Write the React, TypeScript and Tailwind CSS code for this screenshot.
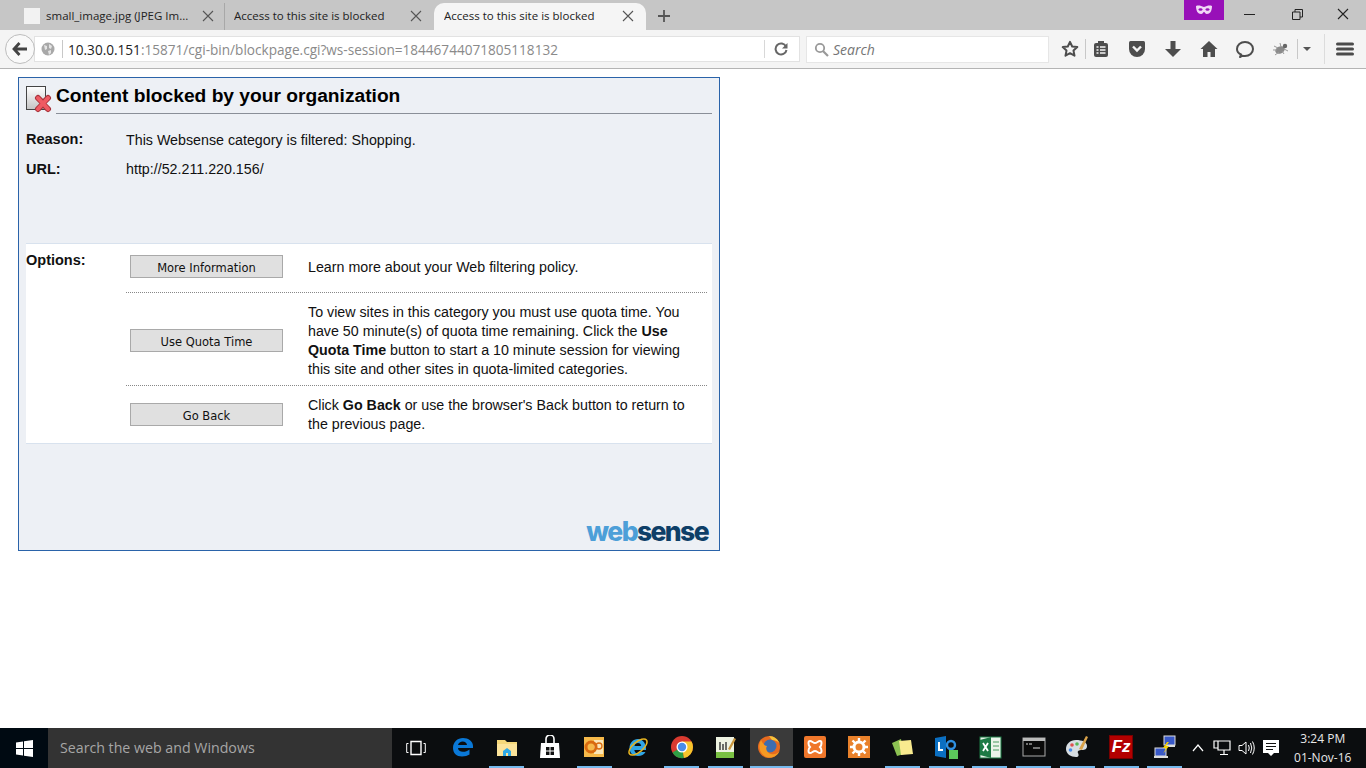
import React from "react";

const ui = { fontFamily: '"Open Sans", "Noto Sans", sans-serif' };
const arial = { fontFamily: '"Liberation Sans", Arial, sans-serif' };

function X({ c = "#555" }: { c?: string }) {
  return (
    <svg width="12" height="12" viewBox="0 0 12 12" className="shrink-0">
      <path d="M1 1l10 10M11 1L1 11" stroke={c} strokeWidth="1.1" fill="none" />
    </svg>
  );
}

function Tab({ text, active, sep, icon, className }: { text: string; active?: boolean; sep?: boolean; icon?: boolean; className: string }) {
  return (
    <div className={`flex items-center h-[27px] mt-[3px] pb-[1px] text-[11.5px] text-[#222] ${className} ${active ? "bg-[#f5f5f5] rounded-t-[10px]" : ""} ${sep ? "border-r border-[#a8a8a8]" : ""}`} style={ui}>
      {icon && <div className="w-[16px] h-[16px] bg-[#f2f2f2] mr-[6px] shrink-0" />}
      <span className="flex-1 whitespace-nowrap overflow-hidden">{text}</span>
      <X />
    </div>
  );
}

function NavIcons() {
  const fill = "#4d4d4d";
  return (
    <div className="flex items-center h-full ml-[12px]">
      <svg width="18" height="18" viewBox="0 0 18 18" className="mr-[6px]">
        <path d="M9 1.8l2.2 4.7 5.1.6-3.8 3.5 1 5.1L9 13.2l-4.5 2.500 1-5.100L1.700 7.100l5.100-.6z" fill="none" stroke={fill} strokeWidth="2" strokeLinejoin="round" />
      </svg>
      <div className="w-px h-[20px] bg-[#c8c8c8] mr-[7px]" />
      <svg width="16" height="18" viewBox="0 0 16 18" className="mr-[19px]">
        <rect x="1" y="3" width="14" height="14" rx="2" fill={fill} />
        <rect x="5" y="1" width="6" height="4" fill={fill} />
        <path d="M3.500 7h2M7 7h5.500M3.500 10h2M7 10h5.500M3.500 13h2M7 13h5.500" stroke="#f5f5f5" strokeWidth="1.500" />
      </svg>
      <svg width="18" height="18" viewBox="0 0 18 18" className="mr-[18px]">
        <path d="M1 2.500Q1 1 2.500 1h13Q17 1 17 2.500V9a8 8 0 0 1-16 0z" fill={fill} />
        <path d="M5 6.500l4 4 4-4" fill="none" stroke="#f5f5f5" strokeWidth="2.400" />
      </svg>
      <svg width="18" height="18" viewBox="0 0 18 18" className="mr-[18px]">
        <path d="M6.500 1h5v8H17l-8 8-8-8h5.500z" fill={fill} />
      </svg>
      <svg width="18" height="18" viewBox="0 0 18 18" className="mr-[18px]">
        <path d="M9 1L.500 9H3v8h4.500v-5h3v5H15V9h2.500z" fill={fill} />
      </svg>
      <svg width="18" height="18" viewBox="0 0 18 18" className="mr-[18px]">
        <path d="M5 14.500C2.500 13.400 1 11.400 1 9c0-4 3.500-7 8-7s8 3 8 7-3.500 7-8 7c-.9 0-1.800-.1-2.600-.3L4 17z" fill="none" stroke={fill} strokeWidth="2" strokeLinejoin="round" />
      </svg>
      <svg width="18" height="16" viewBox="0 0 18 16" className="mr-[7px]">
        <ellipse cx="8" cy="9" rx="5" ry="3.500" fill="#8a8a8a" transform="rotate(-25 8 9)" />
        <circle cx="13" cy="5" r="2.200" fill="#666" />
        <path d="M2 5l4 2M1 9h4M3 14l4-3M8 2l1 4M12 13l-2-3M16 10l-4-2" stroke="#999" strokeWidth="1" />
      </svg>
      <div className="w-px h-[20px] bg-[#c8c8c8] mr-[5px]" />
      <div className="w-0 h-0 border-l-[4px] border-r-[4px] border-t-[4px] border-l-transparent border-r-transparent border-t-[#555] mr-[13px]" />
      <div className="w-px h-[30px] bg-[#dcdcdc] mr-[11px]" />
      <svg width="18" height="14" viewBox="0 0 18 14">
        <path d="M1.500 2h15M1.500 7h15M1.500 12h15" stroke="#4a4a4a" strokeWidth="3" strokeLinecap="round" />
      </svg>
    </div>
  );
}

function Toolbar() {
  return (
    <div className="h-[39px] bg-[#f4f4f4] border-b border-[#b4b4b4] flex items-center relative shrink-0 pl-[5px]" style={ui}>
      <div className="w-[30px] h-[30px] rounded-full border border-[#bdbdbd] bg-[#f9f9f9] flex items-center justify-center z-10 shrink-0">
        <svg width="16" height="14" viewBox="0 0 16 14">
          <path d="M7.500 1L2 7l5.500 6M2.500 7H15" fill="none" stroke="#444" strokeWidth="2.800" />
        </svg>
      </div>
      <div className="w-[766px] h-[26px] -ml-[1px] bg-white border border-[#e2e2e2] flex items-center pl-[6px] shrink-0">
        <svg width="14" height="14" viewBox="0 0 14 14" className="shrink-0">
          <circle cx="7" cy="7" r="6.500" fill="#a8a8a8" />
          <path d="M3 3l3 1 0 3-2 1zM8 2l3 2-1 3-2-1zM7 9l3-1 0 3-2 2z" fill="#e4e4e4" />
        </svg>
        <div className="w-px h-[18px] bg-[#c8c8c8] ml-[7px] mr-[5px]" />
        <span className="text-[13.6px] pt-[2px] text-[#8a8a8a] whitespace-nowrap flex-1" style={ui}>
          <span className="text-[#222]">10.30.0.151</span>:15871/cgi-bin/blockpage.cgi?ws-session=18446744071805118132
        </span>
        <div className="w-px h-[18px] bg-[#d8d8d8] mr-[9px]" />
        <svg width="14" height="14" viewBox="0 0 14 14" className="mr-[11px] shrink-0">
          <path d="M12 4.500A5.500 5.500 0 1 0 12.500 8" fill="none" stroke="#666" strokeWidth="2" />
          <path d="M13.500 1v5.500H8z" fill="#666" />
        </svg>
      </div>
      <div className="w-[243px] h-[27px] ml-[6px] bg-white border border-[#e6e6e6] flex items-center pl-[7px] shrink-0">
        <svg width="15" height="15" viewBox="0 0 15 15" className="shrink-0">
          <circle cx="6" cy="6" r="4.200" fill="none" stroke="#999" strokeWidth="1.800" />
          <path d="M9 9l5 5" stroke="#999" strokeWidth="2.200" />
        </svg>
        <span className="ml-[4px] italic text-[14px] text-[#757575]">Search</span>
      </div>
      <NavIcons />
    </div>
  );
}

function TabBar() {
  return (
    <div className="h-[30px] bg-[#c6c6c6] flex items-start shrink-0 pl-[24px]">
      <Tab icon text="small_image.jpg (JPEG Im..." className="w-[201px] pr-[10px]" sep />
      <Tab text="Access to this site is blocked" className="w-[209px] pl-[9px] pr-[12px]" />
      <Tab active text="Access to this site is blocked" className="w-[212px] pl-[10px] pr-[12px]" />
      <svg width="14" height="14" viewBox="0 0 14 14" className="mt-[9px] ml-[11px]">
        <path d="M7 1v12M1 7h12" stroke="#555" strokeWidth="1.800" />
      </svg>
      <div className="flex-1" />
      <div className="w-[40px] h-[20px] bg-[#9810b8] flex items-center justify-center">
        <svg width="18" height="10" viewBox="0 0 18 10">
          <path d="M1 1c3-1 5 0 8 1 3-1 5-2 8-1 0 5-2 8-5 8-2 0-2-2-3-2s-1 2-3 2C3 9 1 6 1 1z" fill="#f0d8f5" />
          <ellipse cx="5.500" cy="4.500" rx="2" ry="1.300" fill="#9810b8" />
          <ellipse cx="12.500" cy="4.500" rx="2" ry="1.300" fill="#9810b8" />
        </svg>
      </div>
      <div className="w-[142px] flex items-center h-[28px] pl-[20px]">
        <div className="w-[11px] h-px bg-[#222]" />
        <svg width="11" height="11" viewBox="0 0 11 11" className="ml-[37px]">
          <path d="M.500 3h7.500v7.500H.500zM3 3V.500h7.500V8H8" fill="none" stroke="#222" />
        </svg>
        <div className="ml-[34px]"><X c="#222" /></div>
      </div>
    </div>
  );
}

function Btn({ children, className = "" }: { children: string; className?: string }) {
  return (
    <button className={`w-[153px] h-[23px] bg-[#e0e0e0] border border-[#a9a9a9] text-[11.5px] pt-[4px] text-[#111] ml-[4px] shrink-0 ${className}`} style={{ fontFamily: '"DejaVu Sans", Verdana, sans-serif' }}>
      {children}
    </button>
  );
}

function OptionRow({ label, children, dotted, className, btnClass }: { label: string; children: React.ReactNode; dotted?: boolean; className: string; btnClass?: string }) {
  return (
    <div className={`flex items-center ${className} ${dotted ? "border-b border-dotted border-[#888]" : ""}`}>
      <Btn className={btnClass}>{label}</Btn>
      <div className="ml-[25px] w-[392px] text-[14.25px] leading-[19px] text-[#111]">{children}</div>
    </div>
  );
}

function Logo() {
  return (
    <div className="flex justify-end pr-[4px] pt-[72px]">
      <span className="text-[26.5px] leading-[30px] font-extrabold tracking-[-1.6px]" style={{ fontFamily: 'Inter, "Open Sans", sans-serif' }}>
        <span className="text-[#4d9fd8]">web</span>
        <span className="text-[#0e3f68]">sense</span>
      </span>
    </div>
  );
}

function Panel() {
  return (
    <div className="w-[702px] h-[474px] border border-[#2a63a9] bg-[#edf0f5] px-[7px] pt-[7px] text-[14.25px] text-[#111]" style={arial}>
      <div className="flex items-start">
        <svg width="26" height="28" viewBox="0 0 26 28" className="shrink-0">
          <defs>
            <linearGradient id="pg" x1="0" y1="0" x2="0" y2="1">
              <stop offset="0" stopColor="#ffffff" />
              <stop offset="1" stopColor="#c4c4c4" />
            </linearGradient>
          </defs>
          <rect x="0.500" y="1.500" width="19" height="23" fill="url(#pg)" stroke="#444" />
          <path d="M12 13l5 5 5-5M12 24l5-5 5 5" fill="none" stroke="#a8323a" strokeWidth="6" strokeLinecap="round" strokeLinejoin="round" />
          <path d="M12 13l10 11M22 13L12 24" fill="none" stroke="#ef5a62" strokeWidth="4" strokeLinecap="round" />
        </svg>
        <div className="flex-1 ml-[4px] h-[29px] border-b border-[#8a8f98] text-[19.2px] leading-[21px] font-bold text-black">
          Content blocked by your organization
        </div>
      </div>
      <div className="flex mt-[16px] h-[30px]">
        <div className="w-[100px] font-bold text-[14.5px] leading-[18px]">Reason:</div>
        <div className="leading-[20px]">This Websense category is filtered: Shopping.</div>
      </div>
      <div className="flex h-[83px]">
        <div className="w-[100px] font-bold text-[14.5px] leading-[18px]">URL:</div>
        <div className="leading-[18px]">http://52.211.220.156/</div>
      </div>
      <div className="bg-white border-y border-[#d8e2ee] h-[201px] flex">
        <div className="w-[100px] font-bold text-[14.5px] pt-[7px] leading-[18px]">Options:</div>
        <div className="w-[581px]">
          <OptionRow label="More Information" dotted className="h-[49px] pb-[1px]" btnClass="-mt-[3px]">
            Learn more about your Web filtering policy.
          </OptionRow>
          <OptionRow label="Use Quota Time" dotted className="h-[93px] pt-[4px]" btnClass="-mt-[2px]">
            To view sites in this category you must use quota time. You have 50 minute(s) of quota time remaining. Click the <b>Use Quota Time</b> button to start a 10 minute session for viewing this site and other sites in quota-limited categories.
          </OptionRow>
          <OptionRow label="Go Back" className="h-[56px] pt-[2px]" btnClass="-mt-[2px]">
            Click <b>Go Back</b> or use the browser's Back button to return to the previous page.
          </OptionRow>
        </div>
      </div>
      <Logo />
    </div>
  );
}

function Cell({ children, on, active }: { children: React.ReactNode; on?: boolean; active?: boolean }) {
  return (
    <div className={`h-[40px] flex flex-col items-center shrink-0 ${active ? "w-[42.75px] ml-[3px] bg-[#3a3a3a]" : "w-[43.75px]"}`}>
      <div className={`flex-1 flex items-center justify-center ${active ? "pr-[5px]" : ""}`}>{children}</div>
      <div className={`h-[2px] ${active ? "w-full" : "w-[35px]"} ${on ? "bg-[#76b9ed]" : ""}`} />
    </div>
  );
}

const S = ({ children, w = 24, h = 24 }: { children: React.ReactNode; w?: number; h?: number }) => (
  <svg width={w} height={h} viewBox="0 0 24 24">{children}</svg>
);

function TaskIcons() {
  return (
    <>
      <Cell>
        <S>
          <path d="M12 3c-5.500 0-10 4-10 10 0 5 3.500 8.500 9 8.500 3 0 5.500-.8 7.500-2v-5c-2 1.500-4 2.300-6.500 2.300-3 0-4.800-1.300-5-3.800H22v-2C22 6.500 17.500 3 12 3zM7 10c.5-2 2.500-3.500 4.700-3.500 2.300 0 4 1.300 4.300 3.500z" fill="#0a78d7" />
        </S>
      </Cell>
      <Cell on>
        <S>
          <path d="M2 5h8l2 2h10v14H2z" fill="#f5d77a" />
          <rect x="2" y="9" width="20" height="12" fill="#fce39a" />
          <path d="M8 21v-5l4-3 4 3v5h-3v-3h-2v3z" fill="#2fa8e6" />
        </S>
      </Cell>
      <Cell>
        <S>
          <path d="M3 8h18l1 15H2z" fill="#fff" />
          <path d="M8 8V4a4 4 0 0 1 8 0v4" fill="none" stroke="#fff" strokeWidth="1.600" />
          <path d="M8 12h3.500v3.500H8zM12.500 12H16v3.500h-3.500zM8 16.500h3.500V20H8zM12.500 16.500H16V20h-3.500z" fill="#111" />
        </S>
      </Cell>
      <Cell on>
        <S>
          <rect x="2" y="2" width="20" height="20" fill="#f6b94a" />
          <rect x="12" y="5" width="9" height="14" fill="#fbe6b8" />
          <circle cx="9" cy="12" r="5" fill="none" stroke="#d96a10" strokeWidth="3" />
          <circle cx="17" cy="11" r="3" fill="none" stroke="#d96a10" strokeWidth="1.300" />
        </S>
      </Cell>
      <Cell>
        <S>
          <path d="M12 4c-5 0-8.500 4-8.500 9 0 5 3.500 8 8.500 8 3.500 0 6-1.500 7.500-4h-4.800c-.8 1-1.700 1.300-2.900 1.300-2 0-3.300-1.300-3.500-3.300H20c.5-6-3-11-8-11zM8.500 11c.3-1.800 1.700-3 3.500-3s3 1.200 3.200 3z" fill="#2fa5e6" />
          <ellipse cx="12" cy="12" rx="11" ry="5" fill="none" stroke="#e6b422" strokeWidth="1.500" transform="rotate(-40 12 12)" />
        </S>
      </Cell>
      <Cell on>
        <S>
          <circle cx="12" cy="12" r="11" fill="#d93a30" />
          <path d="M12 12L2.500 17.500A11 11 0 0 0 14 23z" fill="#2f9e44" />
          <path d="M12 12l2 11A11 11 0 0 0 23 12 11 11 0 0 0 21.500 6.500H12z" fill="#f7c52b" />
          <circle cx="12" cy="12" r="5.500" fill="#fff" />
          <circle cx="12" cy="12" r="4.200" fill="#4a8ce8" />
        </S>
      </Cell>
      <Cell on>
        <S>
          <rect x="3" y="2" width="18" height="21" fill="#eef3e2" />
          <rect x="3" y="17" width="18" height="6" fill="#7ac143" />
          <path d="M7 7v8M10 9v6M13 7v8" stroke="#333" strokeWidth="1.400" />
          <path d="M15 14L21 3l2 1-6 11z" fill="#c8963e" />
        </S>
      </Cell>
      <Cell on active>
        <S>
          <circle cx="12" cy="12" r="11" fill="#e66a1f" />
          <circle cx="13" cy="11" r="6.500" fill="#3c6db0" />
          <path d="M4 5c-3 6-2 13 5 17 6 2 12-1 14-7-1 3-5 5-9 4-4-1-6-5-4-8-2 0-4-2-6-6z" fill="#f59a23" />
          <path d="M12 1c5 0 9 3 11 8-2-3-5-4-8-4z" fill="#f5c23a" />
        </S>
      </Cell>
      <Cell>
        <S>
          <rect x="1" y="1" width="22" height="22" rx="2" fill="#f0772b" />
          <path d="M7 6c2 0 3 2 5 2s3-2 5-2 2 4 0 6c2 2 2 6 0 6s-3-2-5-2-3 2-5 2-2-4 0-6c-2-2-2-6 0-6z" fill="none" stroke="#fff" strokeWidth="2" />
        </S>
      </Cell>
      <Cell>
        <S>
          <rect x="1" y="1" width="22" height="22" fill="#e9812b" />
          <circle cx="12" cy="12" r="5" fill="none" stroke="#fff" strokeWidth="3" />
          <path d="M12 3v4M12 17v4M3 12h4M17 12h4M5.500 5.500l3 3M15.500 15.500l3 3M5.500 18.500l3-3M15.500 8.500l3-3" stroke="#fff" strokeWidth="2.400" />
        </S>
      </Cell>
      <Cell on>
        <S>
          <path d="M2 8l9-4 3 15-7 2z" fill="#8cc152" />
          <path d="M9 6l12-1 2 14-12 1z" fill="#f8ea8f" />
        </S>
      </Cell>
      <Cell on>
        <S>
          <path d="M1 3l11-2v22L1 21z" fill="#0b6fc2" />
          <path d="M4 7v9h5v-2H6V7z" fill="#fff" />
          <circle cx="17" cy="10" r="4" fill="none" stroke="#2f8fe0" strokeWidth="2.400" />
          <rect x="15" y="15" width="9" height="9" fill="#5cc75c" />
        </S>
      </Cell>
      <Cell on>
        <S>
          <rect x="2" y="2" width="21" height="21" fill="#eaf3ea" stroke="#1d7a45" />
          <path d="M2 5l11-3v21L2 20z" fill="#1d7a45" />
          <path d="M5 8l5 8M10 8l-5 8" stroke="#fff" strokeWidth="1.800" />
          <path d="M15 7h6M15 11h6M15 15h6" stroke="#7fb98f" strokeWidth="1.500" />
        </S>
      </Cell>
      <Cell on>
        <S>
          <rect x="1" y="3" width="22" height="18" fill="#0a0a0a" stroke="#aaa" />
          <rect x="1" y="3" width="22" height="3" fill="#bbb" />
          <path d="M4 9h2M7 9h3M11 13h7" stroke="#ddd" strokeWidth="1.200" />
        </S>
      </Cell>
      <Cell on>
        <S>
          <path d="M11 5C5 5 1 9 1 14c0 5 5 8 10 8 3 0 3-2 2-4s1-3 4-3 5-1 5-4c0-4-5-6-11-6z" fill="#d7dde2" />
          <circle cx="7" cy="10" r="1.800" fill="#e05050" />
          <circle cx="12" cy="9" r="1.800" fill="#58b858" />
          <circle cx="5.500" cy="15" r="1.800" fill="#4a8ce8" />
          <path d="M14 14L21 1l2 1-6 13z" fill="#d9a24a" />
        </S>
      </Cell>
      <Cell on>
        <div className="w-[24px] h-[24px] bg-[#b30000] border border-[#700] text-white text-[17px] leading-[22px] italic font-bold text-center" style={arial}>Fz</div>
      </Cell>
      <Cell on>
        <S>
          <rect x="11" y="1" width="11" height="9" fill="#3858c8" stroke="#ddd" />
          <rect x="2" y="13" width="11" height="8" fill="#3858c8" stroke="#ddd" />
          <path d="M1 21h14v2H1zM13 10h9v2h-9z" fill="#ddd" />
          <path d="M14 7l-4 6 3 0-3 6 6-8h-3l3-4z" fill="#f5d000" />
        </S>
      </Cell>
    </>
  );
}

function Taskbar() {
  return (
    <div className="h-[40px] bg-[#0b0d0f] flex items-center text-white shrink-0">
      <div className="w-[48px] h-full bg-[#000a12] flex items-center justify-center shrink-0">
        <svg width="17" height="17" viewBox="0 0 17 17">
          <path d="M0 2.500l7-1v6.500H0zM8 1.300L17 0v8H8zM0 9h7v6.500l-7-1zM8 9h9v8l-9-1.300z" fill="#fff" />
        </svg>
      </div>
      <div className="w-[344px] h-full bg-[#333333] flex items-center pl-[12px] text-[14.2px] text-[#a6a6a6] shrink-0" style={ui}>
        Search the web and Windows
      </div>
      <div className="w-[49px] flex justify-center pr-[2px] shrink-0">
        <svg width="20" height="16" viewBox="0 0 20 16">
          <path d="M5 1.500h10v13H5z" fill="none" stroke="#fff" strokeWidth="1.400" />
          <path d="M2.500 3.500H.7v9h1.800M17.500 3.500h1.800v9h-1.800" fill="none" stroke="#fff" />
        </svg>
      </div>
      <TaskIcons />
      <div className="flex items-center flex-1 pl-[5px]">
        <svg width="12" height="8" viewBox="0 0 12 8"><path d="M1 7l5-6 5 6" fill="none" stroke="#fff" strokeWidth="1.200" /></svg>
        <svg width="18" height="16" viewBox="0 0 18 16" className="ml-[9px]">
          <path d="M5 1H1v7h4M5 1h12v9H5zM11 10v4M7 14.500h8" fill="none" stroke="#fff" strokeWidth="1.200" />
        </svg>
        <svg width="17" height="16" viewBox="0 0 17 16" className="ml-[7px]">
          <path d="M1 5.500h3l4-3.500v12l-4-3.500H1zM10.500 5q1.500 3 0 6M12.500 3q2.500 5 0 10M14.500 1.500q3.500 6.500 0 13" fill="none" stroke="#fff" />
        </svg>
        <svg width="16" height="17" viewBox="0 0 16 17" className="ml-[8px]">
          <path d="M0 0h16v13h-5l-3 3-3-3H0z" fill="#fff" />
          <path d="M3 3.500h10M3 6.500h10M3 9.500h7" stroke="#111" />
        </svg>
        <div className="w-[60px] ml-[14px] text-center text-[12px] leading-[19px] text-[#e8e8e8]" style={ui}>
          <div>3:24 PM</div>
          <div>01-Nov-16</div>
        </div>
      </div>
    </div>
  );
}

export default function App() {
  return (
    <div className="w-[1366px] h-[768px] flex flex-col overflow-hidden bg-white">
      <TabBar />
      <Toolbar />
      <div className="flex-1 pt-[8px] pl-[18px]">
        <Panel />
      </div>
      <Taskbar />
    </div>
  );
}
